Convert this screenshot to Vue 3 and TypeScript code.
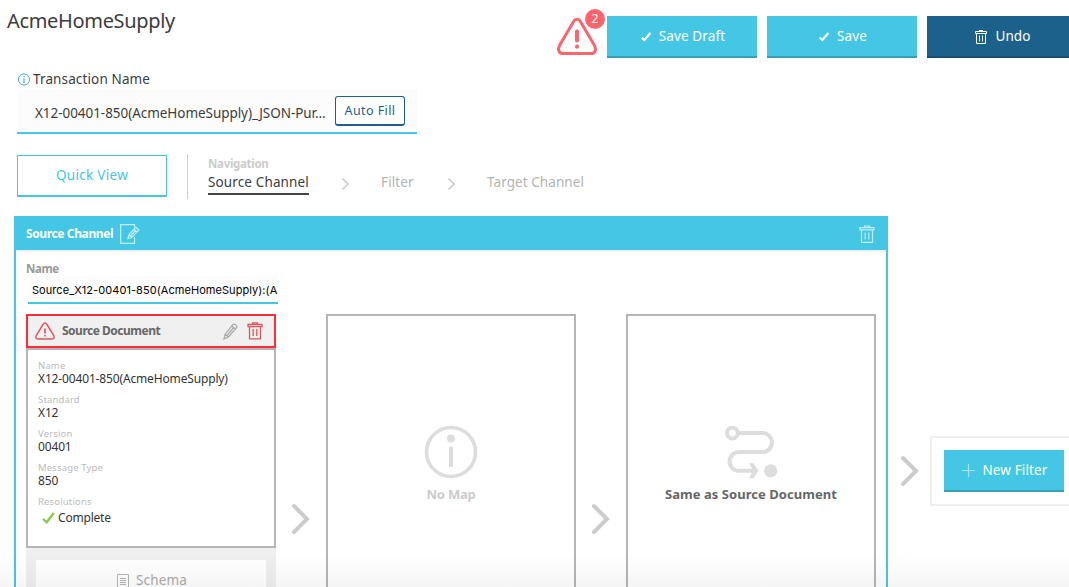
<script setup lang="ts">
interface Field {
  label: string
  value: string
}

const fields: Field[] = [
  { label: 'Name', value: 'X12-00401-850(AcmeHomeSupply)' },
  { label: 'Standard', value: 'X12' },
  { label: 'Version', value: '00401' },
  { label: 'Message Type', value: '850' },
]

const errorCount = 2
</script>

<template>
  <div class="page">
    <header class="top">
      <h1 class="title">AcmeHomeSupply</h1>
      <div class="actions">
        <div class="alert">
          <svg width="42" height="40" viewBox="0 0 42 40" fill="none" stroke="#ff646c">
            <path d="M17.600 4.400 3.500 28.600C1.200 32.900 3.200 36.600 7.500 36.600H34.500C38.800 36.600 40.800 32.900 38.500 28.600L24.400 4.400C22.800 1.600 19.200 1.600 17.600 4.400Z" stroke-width="3" />
            <path d="M21 14.500V23.500M21 29.400V29.700" stroke-width="4" stroke-linecap="round" />
          </svg>
          <span class="badge">{{ errorCount }}</span>
        </div>
        <button class="btn">
          <svg width="10" height="10" viewBox="0 0 10 10" fill="none" stroke="#fff" stroke-width="2.200"><path d="M.7 5.600 3.400 8 9.300 1" /></svg>
          <span>Save Draft</span>
        </button>
        <button class="btn">
          <svg width="10" height="10" viewBox="0 0 10 10" fill="none" stroke="#fff" stroke-width="2.200"><path d="M.7 5.600 3.400 8 9.300 1" /></svg>
          <span>Save</span>
        </button>
        <button class="btn dark">
          <svg width="12" height="14" viewBox="0 0 12 14" fill="none" stroke="#fff"><path d="M.5 1.500H11.500V3.500H.5ZM4 .5H8M1.500 3.500V13.500H10.500V3.500M4.500 5.500V11.500M7.500 5.500V11.500" /></svg>
          <span>Undo</span>
        </button>
      </div>
    </header>

    <section class="transaction">
      <div class="tlabel">
        <svg width="13" height="13" viewBox="0 0 13 13" fill="none" stroke="#3ea6f2"><circle cx="7" cy="6.500" r="5.600" /><path d="M7 5.500V10M7 3V4.300" stroke-width="1.200" /></svg>
        <span>Transaction Name</span>
      </div>
      <div class="tinput">
        <span class="tvalue">X12-00401-850(AcmeHomeSupply)_JSON-Pur...</span>
        <button class="autofill">Auto Fill</button>
      </div>
    </section>

    <section class="navrow">
      <button class="quick">Quick View</button>
      <nav class="nav">
        <div class="navtitle">Navigation</div>
        <div class="crumbs">
          <span class="crumb active">Source Channel</span>
          <svg class="sep" width="9" height="14" viewBox="0 0 9 14"><path d="M1.500 1.500 7 7 1.500 12.500" /></svg>
          <span class="crumb filter">Filter</span>
          <svg class="sep" width="9" height="14" viewBox="0 0 9 14"><path d="M1.500 1.500 7 7 1.500 12.500" /></svg>
          <span class="crumb target">Target Channel</span>
        </div>
      </nav>
    </section>

    <main class="flow">
      <section class="panel">
        <div class="phead">
          <span class="ptitle">Source Channel</span>
          <svg width="20" height="20" viewBox="0 0 20 20" fill="none" stroke="#c3edf8" stroke-width="1.200">
            <path d="M14.500 3.500V.7H.7V19.300H14.500V13" />
            <path d="M8 14.500 9 10.500 15.800 3.200 18.800 6 12 13.300ZM9 10.500 12 13.300M14 5.200 17 8M10.500 12 16 6" />
          </svg>
          <svg class="ptrash" width="16" height="19" viewBox="0 0 16 19" fill="none" stroke="#c3edf8" stroke-width="1.200"><path d="M1 2.600H15V4.800H1ZM5.500 2.200V1H10.500V2.200M2.500 4.800V17.400H13.500V4.800M6.200 7.500V14.500M9.800 7.500V14.500" /></svg>
        </div>
        <div class="pbody">
          <div class="nlabel">Name</div>
          <div class="ninput"><span>Source_X12-00401-850(AcmeHomeSupply):(A</span></div>
          <div class="cols">
            <div class="doc">
              <div class="dhead">
                <svg width="20" height="18" viewBox="0 0 20 18" fill="none" stroke="#e0565f"><path d="M8 2.500 1.500 13.200C.1 15.600 1.200 17.100 3.500 17.100H16.500C18.800 17.100 19.900 15.600 18.500 13.200L12 2.500C10.900.5 9.100.5 8 2.500Z" stroke-width="1.500" /><path d="M10 6.500V11.500M10 13V14.600" stroke-width="1.700" /></svg>
                <span class="dtitle">Source Document</span>
                <svg class="pencil" width="15" height="17" viewBox="0 0 15 17" fill="none" stroke="#a8a8a8" stroke-width="1.200"><path d="M1 16 2 11.500 10 1.500C11.200.2 14.800 2.800 13.700 4.500L5.500 14ZM2 11.500 5.500 14M8.800 3 12.500 6M4 12.500 10.800 4.500" /></svg>
                <svg width="16" height="18" viewBox="0 0 16 18" fill="none" stroke="#e0565f" stroke-width="1.300"><path d="M1 2.500H15V4.700H1ZM5.500 2V.8H10.500V2M2.500 4.700V16.800H13.500V4.700M6.200 7V14M9.800 7V14" /></svg>
              </div>
              <div class="dbody">
                <div v-for="f in fields" :key="f.label" class="field">
                  <div class="flabel">{{ f.label }}</div>
                  <div class="fvalue">{{ f.value }}</div>
                </div>
                <div class="flabel">Resolutions</div>
                <div class="complete">
                  <svg width="13" height="12" viewBox="0 0 13 12" fill="none" stroke="#8cc94b" stroke-width="2.400"><path d="M1 6.800 4.700 10.300 11.800 1" /></svg>
                  <span>Complete</span>
                </div>
              </div>
              <div class="dfoot">
                <div class="schema">
                  <svg width="12" height="14" viewBox="0 0 12 14" fill="none" stroke="#b5b5b5"><path d="M.5.5H11.500V13.500H.5ZM3 4.500H9M3 6.500H9M3 8.500H9M3 10.500H9" /></svg>
                  <span>Schema</span>
                </div>
              </div>
            </div>
            <div class="arrow"><svg width="20" height="32" viewBox="0 0 20 32"><path d="M3 3 16 16 3 29" /></svg></div>
            <div class="box">
              <svg width="54" height="54" viewBox="0 0 54 54" fill="none" stroke="#ddd"><circle cx="27" cy="27" r="24.500" stroke-width="3.600" /><path d="M27 21.500V42" stroke-width="4" /><circle cx="27" cy="13.500" r="4" fill="#ddd" stroke="none" /></svg>
              <div class="btext muted">No Map</div>
            </div>
            <div class="arrow"><svg width="20" height="32" viewBox="0 0 20 32"><path d="M3 3 16 16 3 29" /></svg></div>
            <div class="box">
              <svg width="54" height="54" viewBox="0 0 54 54" fill="none" stroke="#ddd" stroke-width="4"><circle cx="8.400" cy="8.100" r="5.400" /><path d="M14 8.100H38.500A9.400 9.400 0 0 1 38.500 27H15A9.400 9.400 0 0 0 15 45.800H31" /><path d="M25 38.300H29.500L34.500 45.800 29.500 53.200H25L29.200 45.800Z" fill="#ddd" stroke="none" /><circle cx="46.700" cy="45.800" r="6.600" fill="#ddd" stroke="none" /></svg>
              <div class="btext same">Same as Source Document</div>
            </div>
          </div>
        </div>
      </section>
      <div class="outarrow"><svg width="20" height="32" viewBox="0 0 20 32"><path d="M3 3 16 16 3 29" /></svg></div>
      <aside class="newbox">
        <button class="btn new">
          <svg width="13" height="13" viewBox="0 0 13 13" stroke="#a9e6f5" stroke-width="1.200"><path d="M6.500 0V13M0 6.500H13" /></svg>
          <span>New Filter</span>
        </button>
      </aside>
    </main>
    <div class="fade"></div>
  </div>
</template>

<style>
html, body { overflow: hidden; background: #fff; }
</style>

<style scoped>
.page { position: relative; width: 1069px; height: 587px; overflow: hidden; background: #fff; color: #3c3c3c; font-family: "Noto Sans", sans-serif; font-size: 13.500px; line-height: 20px; letter-spacing: .13px; }
.page * { box-sizing: border-box; white-space: nowrap; }
svg { display: block; flex: none; }
button { font: inherit; letter-spacing: inherit; padding: 0; margin: 0; border: 0; border-radius: 0; }
.top { display: flex; justify-content: space-between; height: 70px; width: 1077px; }
.title { margin: 7px 0 0 7px; font-size: 20px; line-height: 28px; font-weight: 400; letter-spacing: -.33px; }
.actions { display: flex; gap: 10px; padding-top: 16px; }
.alert { position: relative; width: 40px; padding-top: 1px; }
.alert svg { margin-left: -1px; }
.badge { position: absolute; left: 28px; top: -7px; width: 20px; height: 20px; border-radius: 50%; background: #ff646c; color: #fff; font-size: 12px; text-align: center; line-height: 20px; }
.btn { width: 150px; height: 42px; background: #43c7e5; border-bottom: 2px solid #38a0b8; padding-left: 2px; color: #fff; display: flex; align-items: center; justify-content: center; gap: 8px; }
.btn svg { margin-top: 1px; }
.dark { background: #1b618c; border-bottom-color: #164d70; }
.transaction { margin-left: 17px; width: 400px; }
.tlabel { display: flex; align-items: center; gap: 3px; height: 19px; padding-bottom: 1px; }
.tinput { height: 45px; display: flex; align-items: center; background: #fcfcfc; border-bottom: 2px solid #43c7e5; padding: 0 12px 0 18px; justify-content: space-between; }
.tvalue { padding-top: 5px; letter-spacing: -.05px; }
.autofill { width: 70px; height: 30px; border: 1px solid #1b618c; border-bottom-width: 2px; border-radius: 3px; background: #fff; color: #1b618c; font-size: 12.500px; letter-spacing: .4px; padding-top: 2px; }
.navrow { display: flex; margin: 20px 0 0 17px; height: 46px; }
.quick { width: 150px; height: 42px; margin-top: 1px; padding-bottom: 1px; background: #fff; border: 1px solid #43c7e5; border-bottom-width: 2px; color: #43c7e5; letter-spacing: .3px; }
.nav { margin-left: 20px; padding-left: 20px; border-left: 1px solid #ccc; height: 45px; }
.navtitle { font-size: 11.500px; font-weight: 700; color: #ccc; line-height: 16px; padding-top: 2px; height: 18px; letter-spacing: -.3px; }
.crumbs { display: flex; color: #b3b3b3; }
.crumb { height: 23px; }
.active { color: #3c3c3c; border-bottom: 2px solid #444; width: 101px; }
.sep { margin: 5px 0 0 32px; fill: none; stroke: #c8c8c8; stroke-width: 1.500; }
.filter { margin-left: 31px; width: 34px; }
.target { margin-left: 31px; letter-spacing: .07px; }
.flow { display: flex; margin-top: 16px; }
.panel { flex: none; margin-left: 14px; width: 874px; height: 420px; border: 2px solid #43c7e5; border-top: 0; }
.phead { height: 34px; background: #43c7e5; display: flex; align-items: center; padding: 2px 11px 0 10px; gap: 7px; }
.ptitle { color: #fff; font-weight: 700; font-size: 12px; letter-spacing: -.38px; }
.ptrash { margin-left: auto; }
.pbody { border-top: 2px solid #eee; padding: 9px 10px 0; }
.nlabel { font-size: 11.500px; font-weight: 700; color: #999; line-height: 16px; height: 15px; letter-spacing: -.4px; }
.ninput { margin-left: 2px; width: 250px; height: 28px; background: #fcfcfc; border-bottom: 2px solid #43c7e5; padding: 4px 0 0 4px; overflow: hidden; font-family: Inter, sans-serif; font-size: 11px; color: #000; letter-spacing: .06px; }
.cols { display: flex; height: 310px; margin-top: 10px; }
.doc { width: 250px; background: #efefef; }
.dhead { height: 34px; border: 2px solid #ff2d38; background: #f0f0f0; display: flex; align-items: center; padding: 0 11px 0 7px; }
.dtitle { margin-left: 7px; font-size: 12px; font-weight: 700; color: #666; letter-spacing: -.5px; }
.pencil { margin: 0 9px 0 auto; }
.dbody { height: 200px; background: #fff; border: 2px solid #b5b5b5; padding: 9px 10px 0; }
.field { height: 34px; }
.flabel { font-size: 9.500px; line-height: 14px; color: #bbb; height: 13px; letter-spacing: .16px; }
.fvalue { font-size: 12px; line-height: 14px; color: #333; letter-spacing: -.15px; }
.complete { display: flex; align-items: center; gap: 3px; padding-left: 4px; font-size: 12px; color: #333; letter-spacing: -.2px; }
.dfoot { padding: 12px 10px 0; }
.schema { height: 40px; background: #fff; display: flex; align-items: center; justify-content: center; gap: 7px; padding-left: 2px; color: #aaa; }
.schema svg { margin-top: 2px; }
.arrow { width: 50px; padding: 189px 0 0 15px; }
.arrow path, .outarrow path { fill: none; stroke: #ccc; stroke-width: 4; stroke-linecap: round; }
.box { width: 250px; border: 2px solid #b5b5b5; display: flex; flex-direction: column; align-items: center; padding-top: 109px; }
.btext { margin-top: 5px; font-weight: 700; font-size: 13px; color: #666; letter-spacing: .05px; }
.muted { color: #ccc; letter-spacing: -.2px; }
.outarrow { flex: none; padding: 239px 0 0 12px; width: 42px; }
.newbox { margin-top: 220px; width: 150px; height: 70px; flex: none; border: 2px solid #eee; padding: 12px; }
.new { width: 120px; gap: 7px; }
.fade { position: absolute; left: 0; right: 0; bottom: 0; height: 32px; background: linear-gradient(rgba(0,0,0,0), rgba(0,0,0,.04)); }
</style>
